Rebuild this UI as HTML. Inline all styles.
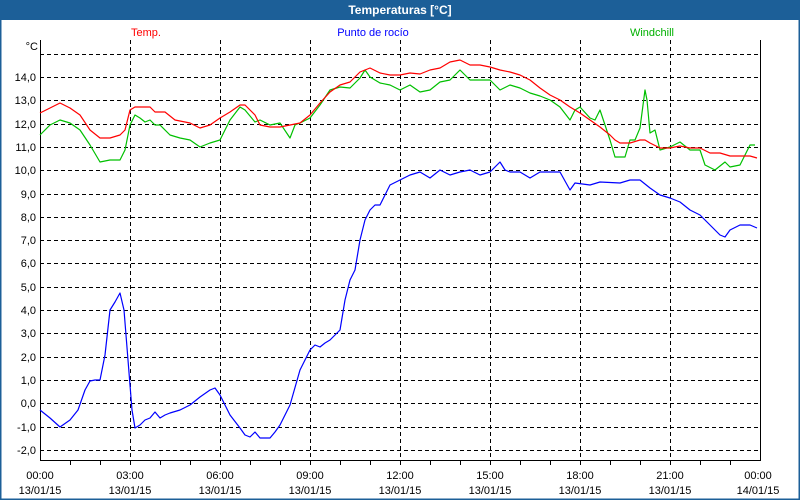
<!DOCTYPE html>
<html><head><meta charset="utf-8"><style>
html,body{margin:0;padding:0;width:800px;height:500px;overflow:hidden;background:#fff}
svg{display:block}
text{font-family:"Liberation Sans","DejaVu Sans",sans-serif;font-size:11px}
</style></head><body>
<svg width="800" height="500" viewBox="0 0 800 500">
<rect x="0" y="0" width="800" height="500" fill="#fff"/>
<rect x="0" y="0" width="800" height="20" fill="#1c5f98"/>
<rect x="0" y="0" width="1.5" height="500" fill="#1c5f98"/>
<rect x="798.5" y="0" width="1.5" height="500" fill="#1c5f98"/>
<rect x="0" y="498.5" width="800" height="1.5" fill="#1c5f98"/>
<text x="400" y="14" text-anchor="middle" fill="#fff" font-weight="bold" style="font-size:12px">Temperaturas [°C]</text>
<text x="146" y="36" text-anchor="middle" fill="#ff0000">Temp.</text>
<text x="373" y="36" text-anchor="middle" fill="#0000ff">Punto de rocío</text>
<text x="652" y="36" text-anchor="middle" fill="#00b000">Windchill</text>
<g stroke="#000" stroke-width="1" stroke-dasharray="4,3" shape-rendering="crispEdges">
<line x1="40" y1="54.5" x2="760" y2="54.5"/>
<line x1="40" y1="77.5" x2="760" y2="77.5"/>
<line x1="40" y1="100.5" x2="760" y2="100.5"/>
<line x1="40" y1="124.5" x2="760" y2="124.5"/>
<line x1="40" y1="147.5" x2="760" y2="147.5"/>
<line x1="40" y1="170.5" x2="760" y2="170.5"/>
<line x1="40" y1="194.5" x2="760" y2="194.5"/>
<line x1="40" y1="217.5" x2="760" y2="217.5"/>
<line x1="40" y1="240.5" x2="760" y2="240.5"/>
<line x1="40" y1="263.5" x2="760" y2="263.5"/>
<line x1="40" y1="287.5" x2="760" y2="287.5"/>
<line x1="40" y1="310.5" x2="760" y2="310.5"/>
<line x1="40" y1="333.5" x2="760" y2="333.5"/>
<line x1="40" y1="357.5" x2="760" y2="357.5"/>
<line x1="40" y1="380.5" x2="760" y2="380.5"/>
<line x1="40" y1="403.5" x2="760" y2="403.5"/>
<line x1="40" y1="427.5" x2="760" y2="427.5"/>
<line x1="40" y1="450.5" x2="760" y2="450.5"/>
<line x1="130.5" y1="40" x2="130.5" y2="460"/>
<line x1="220.5" y1="40" x2="220.5" y2="460"/>
<line x1="310.5" y1="40" x2="310.5" y2="460"/>
<line x1="400.5" y1="40" x2="400.5" y2="460"/>
<line x1="490.5" y1="40" x2="490.5" y2="460"/>
<line x1="580.5" y1="40" x2="580.5" y2="460"/>
<line x1="670.5" y1="40" x2="670.5" y2="460"/>
</g>
<g stroke="#000" stroke-width="1" shape-rendering="crispEdges">
<path d="M40.5 40V460.5H760.5V40" fill="none"/>
<path d="M70.5 460v5M100.5 460v5M130.5 460v5M160.5 460v5M190.5 460v5M220.5 460v5M250.5 460v5M280.5 460v5M310.5 460v5M340.5 460v5M370.5 460v5M400.5 460v5M430.5 460v5M460.5 460v5M490.5 460v5M520.5 460v5M550.5 460v5M580.5 460v5M610.5 460v5M640.5 460v5M670.5 460v5M700.5 460v5M730.5 460v5"/>
</g>
<g fill="#000" text-anchor="end">
<text x="38" y="50">°C</text>
<text x="36" y="81">14,0</text>
<text x="36" y="104">13,0</text>
<text x="36" y="128">12,0</text>
<text x="36" y="151">11,0</text>
<text x="36" y="174">10,0</text>
<text x="36" y="198">9,0</text>
<text x="36" y="221">8,0</text>
<text x="36" y="244">7,0</text>
<text x="36" y="267">6,0</text>
<text x="36" y="291">5,0</text>
<text x="36" y="314">4,0</text>
<text x="36" y="337">3,0</text>
<text x="36" y="361">2,0</text>
<text x="36" y="384">1,0</text>
<text x="36" y="407">0,0</text>
<text x="36" y="431">-1,0</text>
<text x="36" y="454">-2,0</text>
</g>
<g fill="#000" text-anchor="middle">
<text x="40" y="479">00:00</text><text x="40" y="494">13/01/15</text>
<text x="130" y="479">03:00</text><text x="130" y="494">13/01/15</text>
<text x="220" y="479">06:00</text><text x="220" y="494">13/01/15</text>
<text x="310" y="479">09:00</text><text x="310" y="494">13/01/15</text>
<text x="400" y="479">12:00</text><text x="400" y="494">13/01/15</text>
<text x="490" y="479">15:00</text><text x="490" y="494">13/01/15</text>
<text x="580" y="479">18:00</text><text x="580" y="494">13/01/15</text>
<text x="670" y="479">21:00</text><text x="670" y="494">13/01/15</text>
<text x="758" y="479">00:00</text><text x="758" y="494">14/01/15</text>
</g>
<g fill="none" stroke-width="1.2" stroke-linejoin="round">
<polyline stroke="#0000ff" points="40,410 50,418 60,427 70,420 78,410 85,390 90,381 95,380 100,380 105,355 110,310 115,302 120,293 124,310 128,360 132,410 135,428 140,425 145,420 150,418 155,412 160,418 165,415 170,413 180,410 190,405 200,397 210,390 215,388 220,395 225,405 230,415 240,428 245,435 250,437 255,432 260,438 270,438 275,432 280,425 290,405 300,370 305,360 310,350 315,345 320,347 325,343 330,340 340,330 345,300 350,280 355,270 360,240 365,220 370,210 375,205 380,205 385,195 390,185 400,180 410,175 420,172 430,178 440,170 450,175 460,172 470,170 480,175 490,172 500,162 505,170 510,172 520,172 530,178 540,172 560,172 570,190 575,183 590,185 600,182 620,183 630,180 640,180 650,188 660,195 670,198 680,202 690,210 700,215 710,225 720,235 725,237 730,230 740,225 750,225 757,228"/>
<polyline stroke="#00c000" points="40,135 50,125 60,120 70,123 80,130 90,145 100,162 110,160 120,160 125,150 130,125 135,115 140,118 145,122 150,120 155,125 160,125 170,135 180,138 190,140 200,147 210,143 220,140 225,130 230,120 240,107 245,110 255,122 260,120 270,125 280,123 290,138 295,125 300,123 310,118 320,105 330,90 340,87 350,88 360,78 365,70 370,77 380,83 390,85 400,90 410,85 420,92 430,90 440,82 450,80 460,70 470,80 490,80 500,90 510,85 520,88 530,93 540,96 550,100 560,107 570,120 575,110 580,107 590,118 595,120 600,110 605,125 610,140 615,157 625,157 630,140 635,140 640,128 645,90 647,100 650,133 655,130 660,150 670,147 680,142 690,150 700,150 705,165 715,170 725,162 730,167 740,165 750,145 755,145"/>
<polyline stroke="#ff0000" points="40,113 50,108 60,103 70,108 80,115 90,130 100,138 110,138 120,135 125,130 130,110 135,107 150,107 155,112 165,112 175,120 190,123 200,128 210,125 220,118 230,112 240,105 245,105 255,115 260,125 270,127 280,127 290,125 300,123 310,115 320,103 330,92 340,85 350,82 360,72 370,68 380,73 390,75 400,75 410,73 420,74 430,70 440,68 450,62 460,60 470,65 480,65 490,67 500,70 510,72 520,75 530,80 540,88 550,95 560,100 570,107 580,113 590,120 600,127 610,135 615,140 620,143 630,143 640,140 645,140 650,143 660,148 670,148 680,146 690,148 700,148 710,153 720,153 730,156 750,156 757,158"/>
</g>
</svg>
</body></html>
